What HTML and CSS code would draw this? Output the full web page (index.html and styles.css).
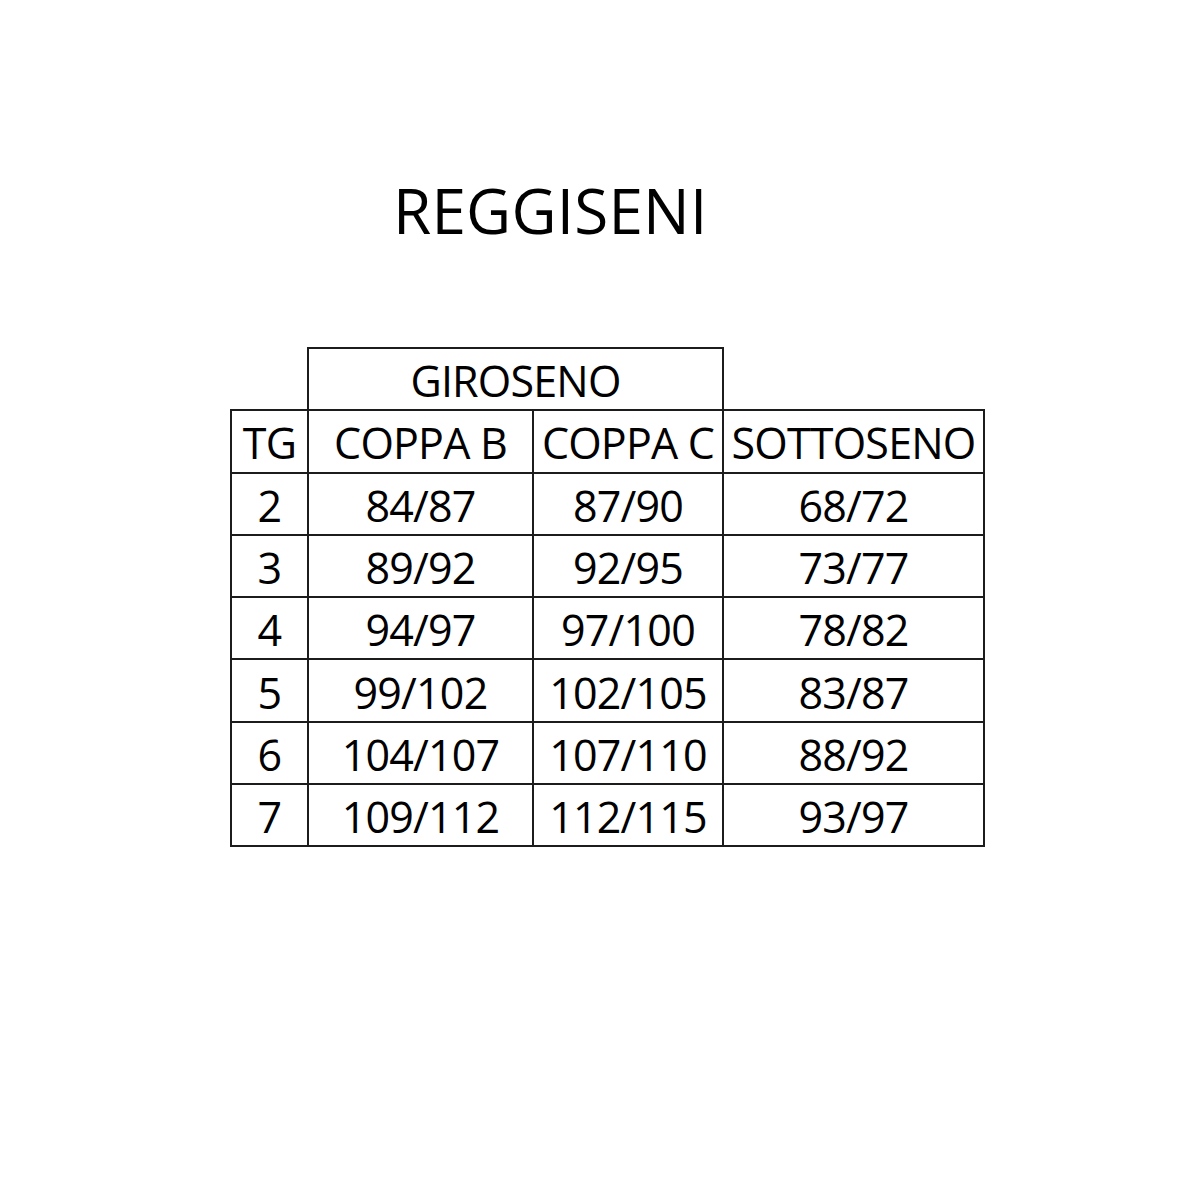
FILE: index.html
```html
<!DOCTYPE html>
<html lang="it">
<head>
<meta charset="utf-8">
<title>Reggiseni</title>
<link rel="stylesheet" href="styles.css">
</head>
<body>
<div class="page">
  <h1 class="title">REGGISENI</h1>
  <table class="sizes">
    <colgroup>
      <col class="c-tg">
      <col class="c-b">
      <col class="c-c">
      <col class="c-s">
    </colgroup>
    <tr class="group-row">
      <td class="blank"></td>
      <td class="group" colspan="2">GIROSENO</td>
      <td class="blank"></td>
    </tr>
    <tr>
      <td>TG</td>
      <td>COPPA B</td>
      <td>COPPA C</td>
      <td>SOTTOSENO</td>
    </tr>
    <tr><td>2</td><td>84/87</td><td>87/90</td><td>68/72</td></tr>
    <tr><td>3</td><td>89/92</td><td>92/95</td><td>73/77</td></tr>
    <tr><td>4</td><td>94/97</td><td>97/100</td><td>78/82</td></tr>
    <tr><td>5</td><td>99/102</td><td>102/105</td><td>83/87</td></tr>
    <tr><td>6</td><td>104/107</td><td>107/110</td><td>88/92</td></tr>
    <tr><td>7</td><td>109/112</td><td>112/115</td><td>93/97</td></tr>
  </table>
</div>
</body>
</html>
```

FILE: styles.css
```css
html, body {
  margin: 0;
  padding: 0;
  background: #ffffff;
}

body {
  font-family: "Open Sans", "Liberation Sans", sans-serif;
  color: #000000;
  width: 1200px;
  height: 1200px;
}

.page {
  padding-top: 178px;
  padding-left: 230px;
}

.title {
  margin: 0 0 0 163px;
  font-size: 62px;
  font-weight: 400;
  line-height: 64px;
  letter-spacing: 0.2px;
}

.sizes {
  margin-top: 105px;
  border-collapse: collapse;
  table-layout: fixed;
  width: 755px;
}

.c-tg { width: 77px; }
.c-b { width: 225px; }
.c-c { width: 190px; }
.c-s { width: 261px; }

.sizes tr {
  height: 62.3px;
}

.sizes td {
  border: 2px solid #1c1c1c;
  padding: 4px 0 0 0;
  text-align: center;
  vertical-align: middle;
  font-size: 43px;
  font-weight: 400;
  line-height: 54px;
  letter-spacing: -0.8px;
  white-space: nowrap;
  overflow: hidden;
}

.sizes td.blank {
  border-top: none;
  border-left: none;
  border-right: none;
}

.group-row td.blank:first-child {
  border-right: 2px solid #1c1c1c;
}

.group-row td.blank:last-child {
  border-left: 2px solid #1c1c1c;
}
```
